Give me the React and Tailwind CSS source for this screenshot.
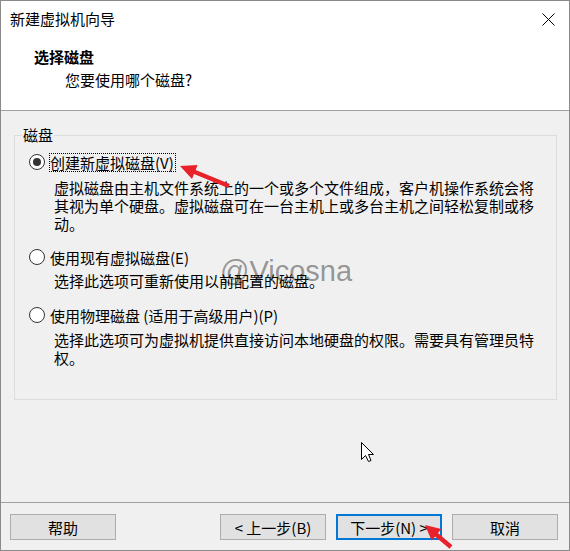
// New VM wizard — "select disk" step, with screenshot annotations on top
function Radio({ checked }) {
  return (
    <span className="flex h-[16px] w-[16px] shrink-0 items-center justify-center rounded-full border border-[#333333] bg-white">
      {checked && <span className="h-[8px] w-[8px] rounded-full bg-[#333333]" />}
    </span>
  )
}

function Option({ checked, focused, label, children, className, descGap }) {
  return (
    <div className={className}>
      <div className="flex h-[20px] items-center">
        <Radio checked={checked} />
        <span
          className={
            focused
              ? 'ml-[4px] border border-dotted border-black pr-[1px] leading-[17px]'
              : 'ml-[4px] border border-transparent pr-[1px] leading-[17px]'
          }
        >
          {label}
        </span>
      </div>
      <p className={descGap + ' ml-[25px] w-[486px] leading-[18px]'}>{children}</p>
    </div>
  )
}

function Button({ primary, children }) {
  return (
    <button
      className={
        primary
          ? 'h-[26px] w-[106px] border-2 border-[#0078d7] bg-[#e1e1e1] text-[15px] leading-none'
          : 'h-[26px] w-[106px] border border-[#adadad] bg-[#e1e1e1] text-[15px] leading-none'
      }
    >
      {children}
    </button>
  )
}

// arrow polygon from tail to tip
function arrowPoints(tail, tip, headLen, headHalf, shaftHalf) {
  const dx = tail[0] - tip[0]
  const dy = tail[1] - tip[1]
  const len = Math.hypot(dx, dy)
  const ux = dx / len
  const uy = dy / len
  const nx = -uy
  const ny = ux
  const bx = tip[0] + ux * headLen
  const by = tip[1] + uy * headLen
  const p = [
    [tip[0], tip[1]],
    [bx + nx * headHalf, by + ny * headHalf],
    [bx + nx * shaftHalf, by + ny * shaftHalf],
    [tail[0] + nx * shaftHalf, tail[1] + ny * shaftHalf],
    [tail[0] - nx * shaftHalf, tail[1] - ny * shaftHalf],
    [bx - nx * shaftHalf, by - ny * shaftHalf],
    [bx - nx * headHalf, by - ny * headHalf],
  ]
  return p.map((q) => q[0].toFixed(1) + ',' + q[1].toFixed(1)).join(' ')
}

export default function App() {
  return (
    <div className="relative flex h-[551px] w-[570px] flex-col border border-[#8a8a8a] bg-[#f0f0f0] font-['Noto_Sans_CJK_SC',sans-serif] text-[15px] text-black">
      {/* header */}
      <div className="h-[110px] shrink-0 border-b border-[#a0a0a0] bg-white">
        <div className="flex h-[36px] items-center justify-between pl-[9px] pr-[14px]">
          <span className="leading-[20px]">新建虚拟机向导</span>
          <svg width="13" height="13" viewBox="0 0 13 13">
            <path d="M0.5 0.5 L12.5 12.5 M12.5 0.5 L0.5 12.5" stroke="#000" strokeWidth="1" />
          </svg>
        </div>
        <h1 className="ml-[33px] mt-[10px] font-bold leading-[20px]">选择磁盘</h1>
        <p className="ml-[64px] mt-[3px] leading-[20px]">您要使用哪个磁盘?</p>
      </div>

      {/* body */}
      <div className="flex-1">
        <fieldset className="ml-[13px] mr-[12px] mt-[14px] h-[275px] border border-[#dcdcdc] p-0">
          <legend className="ml-[7px] px-[1px] leading-[20px]">磁盘</legend>
          <div className="pl-[14px] pt-[7px]">
            <Option checked focused descGap="mt-[7px]" label="创建新虚拟磁盘(V)">
              虚拟磁盘由主机文件系统上的一个或多个文件组成，客户机操作系统会将其视为单个硬盘。虚拟磁盘可在一台主机上或多台主机之间轻松复制或移动。
            </Option>
            <Option className="mt-[14px]" descGap="mt-[5px]" label="使用现有虚拟磁盘(E)">
              选择此选项可重新使用以前配置的磁盘。
            </Option>
            <Option className="mt-[15px]" descGap="mt-[6px]" label="使用物理磁盘 (适用于高级用户)(P)">
              选择此选项可为虚拟机提供直接访问本地硬盘的权限。需要具有管理员特权。
            </Option>
          </div>
        </fieldset>
      </div>

      {/* footer */}
      <div className="flex h-[48px] shrink-0 border-t border-[#a0a0a0] pb-[10px] pl-[9px] pr-[11px] pt-[11px]">
        <Button>帮助</Button>
        <div className="ml-auto flex gap-[10px]">
          <Button>&lt; 上一步(B)</Button>
          <Button primary>下一步(N) &gt;</Button>
          <Button>取消</Button>
        </div>
      </div>

      {/* watermark */}
      <span className="pointer-events-none absolute left-[219px] top-[256px] font-['Liberation_Sans',sans-serif] text-[29px] leading-none text-black/40">
        @Vicosna
      </span>

      {/* annotations */}
      <svg className="pointer-events-none absolute left-[-1px] top-[-1px]" width="570" height="551">
        <polygon points={arrowPoints([229, 186], [180, 166], 16, 7.5, 2.2)} fill="#e8212b" />
        <polygon points={arrowPoints([451, 547], [425, 525], 15, 7.5, 2.2)} fill="#e8212b" />
        <path
          d="M361.5 442.5 L361.5 459.5 L365.5 455.5 L368.5 461.5 L371 460.5 L368.5 454.5 L373.5 454.5 Z"
          fill="#fff"
          stroke="#000"
          strokeWidth="1"
          strokeLinejoin="miter"
        />
      </svg>
    </div>
  )
}
